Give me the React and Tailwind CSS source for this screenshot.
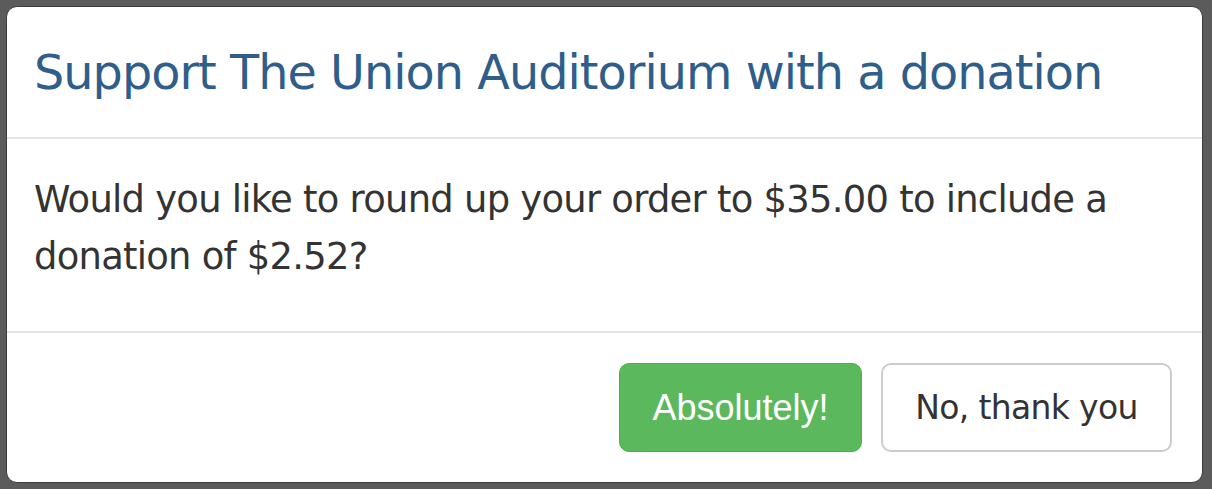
export default function App() {
  return (
    <div className="w-[1212px] h-[489px] bg-[#5b5b5b] pt-[6px] pl-[6px] pr-[9px] pb-[6px] font-['DejaVu_Sans',sans-serif]">
      <div className="w-full h-full bg-white rounded-[11px] border border-[#3c3c3c] flex flex-col overflow-hidden">
        <div className="h-[132px] shrink-0 border-b-2 border-[#e5e5e5] pl-[27px] pt-[37px]">
          <h4 className="text-[47.7px] leading-[58px] text-[#2f5e8b] tracking-[-0.02em]">
            Support The Union Auditorium with a donation
          </h4>
        </div>
        <div className="h-[194px] shrink-0 border-b-2 border-[#e5e5e5] pl-[27px] pr-[20px] pt-[32px]">
          <p className="text-[36.9px] leading-[57px] text-[#333333] tracking-[-0.02em]">
            Would you like to round up your order to $35.00 to include a donation of $2.52?
          </p>
        </div>
        <div className="flex-1 flex justify-end items-start gap-[19px] pt-[30px] pr-[30px]">
          <button className="w-[243px] h-[89px] bg-[#5cb85c] border border-[#4cae4c] rounded-[10px] text-white text-[36px] font-['Liberation_Sans',sans-serif]">
            Absolutely!
          </button>
          <button className="w-[291px] h-[89px] bg-white border-2 border-[#cccccc] rounded-[10px] text-[#333333] text-[33px] tracking-[-0.02em]">
            No, thank you
          </button>
        </div>
      </div>
    </div>
  );
}
